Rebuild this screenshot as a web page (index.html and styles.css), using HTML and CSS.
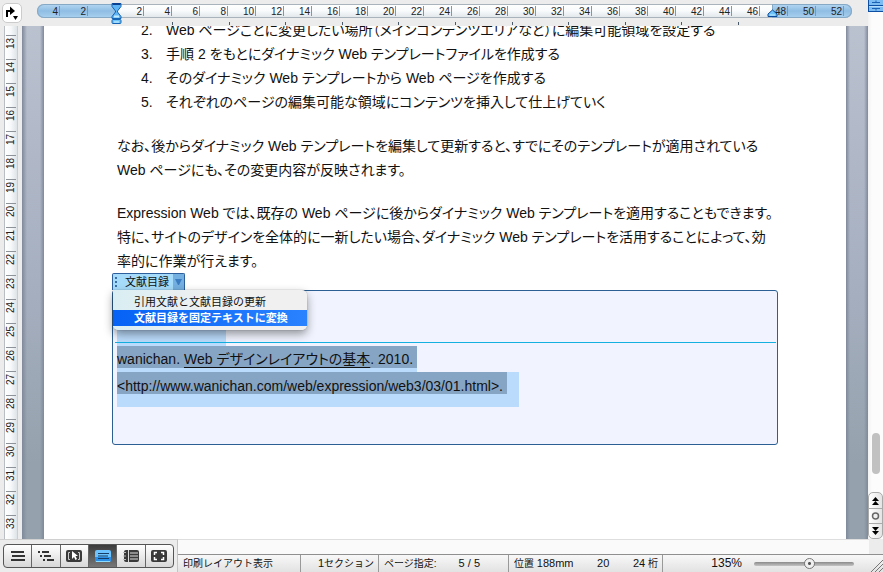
FILE: index.html
```
<!DOCTYPE html>
<html lang="ja">
<head>
    <meta charset="UTF-8">
    <meta name="viewport" content="width=device-width, initial-scale=1.0">
    <link rel="stylesheet" href="styles.css">
    <title>文献目録</title>
</head>
<body>
    <div class="ventana">
        <div class="principal">
            <header class="barra-regla">
                <button class="btn-tab" aria-label="タブ">
                    <svg width="16" height="18" viewBox="0 0 16 18">
                        <path d="M3 13V7H7" fill="none" stroke="#000" stroke-width="2"/>
                        <path d="M6 2.500l5 4.500-5 4z"/>
                        <path d="M9 12h5l-2.500 4z"/>
                    </svg>
                </button>
                <div class="regla">
                    <div class="margen izq"><span>4</span><span>2</span></div>
                    <div class="util">
                        <span>2</span><span>4</span><span>6</span><span>8</span><span>10</span><span>12</span>
                        <span>14</span><span>16</span><span>18</span><span>20</span><span>22</span><span>24</span>
                        <span>26</span><span>28</span><span>30</span><span>32</span><span>34</span><span>36</span>
                        <span>38</span><span>40</span><span>42</span><span>44</span><span>46</span>
                    </div>
                    <div class="margen der"><span class="corto">48</span><span>50</span><span>52</span></div>
                    <svg class="sangria" width="11" height="23" viewBox="0 0 11 23">
                        <path d="M1 1.500h9v3L6.500 9v1L10 14.500v2H1v-2L4.500 10V9L1 4.500z" fill="#5fb4f4" stroke="#1463b5"/>
                        <path d="M1.500 2h8" stroke="#0b3f8f" stroke-width="2"/>
                        <path d="M3 13.500h5v2H3z" fill="#c4ecff"/>
                        <rect x="1" y="17.500" width="9" height="4" rx="1" fill="#6cc3fa" stroke="#1463b5"/>
                        <path d="M3 20h5" stroke="#d3f3ff"/>
                    </svg>
                    <svg class="sangria-der" width="11" height="9" viewBox="0 0 11 9">
                        <path d="M5.500 1L10 5v2.500H1V5z" fill="#6cc3fa" stroke="#0b4a9a"/>
                        <path d="M3 6h5" stroke="#c4ecff"/>
                    </svg>
                </div>
                <div class="marcas"><i></i><i></i><i></i><i></i><i></i><i></i><i></i><i></i><i></i><i></i><i></i></div>
            </header>

            <div class="zona">
                <div class="regla-v">
                    <div class="numeros">
                        <span>13</span><span>14</span><span>15</span><span>16</span><span>17</span><span>18</span><span>19</span>
                        <span>20</span><span>21</span><span>22</span><span>23</span><span>24</span><span>25</span><span>26</span>
                        <span>27</span><span>28</span><span>29</span><span>30</span><span>31</span><span>32</span><span>33</span>
                    </div>
                </div>
                <div class="fondo">
                    <main class="pagina">
                        <ol>
                            <li><span>2.</span>Web ページごとに変更したい場所（メインコンテンツエリアなど）に編集可能領域を設定する</li>
                            <li><span>3.</span>手順 2 をもとにダイナミック Web テンプレートファイルを作成する</li>
                            <li><span>4.</span>そのダイナミック Web テンプレートから Web ページを作成する</li>
                            <li><span>5.</span>それぞれのページの編集可能な領域にコンテンツを挿入して仕上げていく</li>
                        </ol>
                        <p>なお、後からダイナミック Web テンプレートを編集して更新すると、すでにそのテンプレートが適用されている<br>Web ページにも、その変更内容が反映されます。</p>
                        <p>Expression Web では、既存の Web ページに後からダイナミック Web テンプレートを適用することもできます。<br>特に、サイトのデザインを全体的に一新したい場合、ダイナミック Web テンプレートを活用することによって、効<br>率的に作業が行えます。</p>

                        <section class="campo">
                            <button class="pestana"><span class="asa"></span><span class="titulo">文献目録</span><span class="flecha"></span></button>
                            <div class="caja">
                                <div class="sel-vacia"></div>
                                <div class="sel"><span>wanichan. <u>Web デザインレイアウトの基本</u>. 2010.</span></div>
                                <div class="sel ultima"><span>&lt;http://www.wanichan.com/web/expression/web3/03/01.html&gt;.</span></div>
                            </div>
                            <div class="menu" role="menu">
                                <button role="menuitem">引用文献と文献目録の更新</button>
                                <button role="menuitem" class="activo">文献目録を固定テキストに変換</button>
                            </div>
                        </section>
                    </main>
                </div>
            </div>
        </div>

        <aside class="scroll">
            <svg class="divisor" width="15" height="12" viewBox="0 0 15 12">
                <rect width="15" height="12" fill="#7dbcf2"/>
                <path d="M0 5.500h15M0 11.500h15M.5 0v12" stroke="#0c4fa3"/>
                <path d="M1 6.500h14" stroke="#b5ddfb"/>
                <path d="M4 2.500h8M4 8.500h8M8 .5v2M8 8.500v2" stroke="#1c62b4"/>
            </svg>
            <div class="pulgar"></div>
            <div class="navegar">
                <button aria-label="前へ"><svg width="13" height="14" viewBox="0 0 13 14"><path d="M6.500 3L10 7H3zM6.500 7L10 11H3z"/></svg></button>
                <button aria-label="選択"><svg width="13" height="14" viewBox="0 0 13 14"><circle cx="6.500" cy="7" r="3" fill="#eee" stroke="#666" stroke-width="1.500"/></svg></button>
                <button aria-label="次へ"><svg width="13" height="14" viewBox="0 0 13 14"><path d="M6.500 7L10 3H3zM6.500 11L10 7H3z"/></svg></button>
            </div>
        </aside>
    </div>

    <footer class="pie">
        <div class="vistas">
            <div class="grupo">
                <button aria-label="下書き"><svg width="18" height="16" viewBox="0 0 18 16"><path d="M2 4h13M3 8h13M2 12h14" stroke="#333" stroke-width="2"/></svg></button>
                <button aria-label="アウトライン"><svg width="18" height="16" viewBox="0 0 18 16"><path d="M1 4h2M5 4h7M3 8h2M7 8h7M6 12h2M10 12h7" stroke="#333" stroke-width="2"/></svg></button>
                <button aria-label="発行"><svg width="18" height="16" viewBox="0 0 18 16"><rect x="1" y="2" width="16" height="12" rx="2" fill="#3a3a3a"/><path d="M5 4.500H3.500v7H5M13 4.500h1.500v7H13" fill="none" stroke="#ccc"/><path d="M7 3v8l2-2 1.500 3 1.500-1-1.500-3H13z" fill="#fff"/></svg></button>
                <button aria-label="印刷レイアウト" class="pulsado"><svg width="18" height="16" viewBox="0 0 18 16"><rect x="1" y="2" width="16" height="12" rx="2" fill="#6cc3ff"/><path d="M1 9h16v3q0 2-2 2H3q-2 0-2-2z" fill="#2b8fe8"/><path d="M4 5.500h11M4 8h10M4 10.500h11" stroke="#173d66"/><path d="M2 13.500h14" stroke="#8cdcff"/></svg></button>
                <button aria-label="ノート"><svg width="18" height="16" viewBox="0 0 18 16"><rect x="2" y="2" width="15" height="12" rx="2" fill="#3a3a3a"/><path d="M6.500 2v12M8 5h8M8 8h8M8 11h8" stroke="#ddd"/><path d="M1 4.500h3M1 8h3M1 11.500h3" stroke="#bbb"/></svg></button>
                <button aria-label="全画面"><svg width="18" height="16" viewBox="0 0 18 16"><rect x="1" y="2" width="16" height="12" rx="2" fill="#3a3a3a"/><path d="M4.500 7V4.500H7M11 4.500h2.500V7M13.500 9v2.500H11M7 11.500H4.500V9" fill="none" stroke="#fff" stroke-width="1.500"/></svg></button>
            </div>
        </div>
        <div class="inferior">
            <div class="hueco"></div>
            <div class="estado">
                <div class="celda vista">印刷レイアウト表示</div>
                <div class="celda seccion"><b>1</b>セクション</div>
                <div class="celda paginas">ページ指定:<b>5 / 5</b></div>
                <div class="celda posicion"><span>位置 <b>188mm</b></span><b>20</b><span><b>24</b> 桁</span></div>
                <div class="zoom">
                    <label for="zoom">135%</label>
                    <input type="range" id="zoom" min="0" max="100" value="56">
                </div>
                <svg class="esquina" width="12" height="12" viewBox="0 0 12 12"><path d="M0 12L12 0M4 12l8-8M8 12l4-4" stroke="#777"/></svg>
            </div>
        </div>
    </footer>
</body>
</html>
```
FILE: styles.css
```
* {
    margin: 0;
    padding: 0;
    box-sizing: border-box;
}
body {
    display: flex;
    flex-direction: column;
    height: 100vh;
    overflow: hidden;
    background-color: #ececec;
    font-family: "Liberation Sans", "Noto Sans CJK JP", sans-serif;
    color: #111;
}
button {
    border: 0;
    background: none;
    font: inherit;
    color: inherit;
}
svg {display: block;}

.ventana {
    flex: 1;
    min-height: 0;
    display: flex;
}
.principal {
    flex: 1;
    min-width: 0;
    display: flex;
    flex-direction: column;
}

/* regla horizontal */
.barra-regla {
    position: relative;
    z-index: 2;
    display: flex;
    align-items: flex-start;
    height: 26px;
    padding: 4px 16px 0 2px;
    background-color: #ececec;
}
.btn-tab {
    width: 20px;
    height: 20px;
    margin-right: 15px;
    margin-top: -1px;
    padding: 0 1px;
    border: 1px solid #ccc;
    border-radius: 5px;
    background-color: #fff;
}
.regla {
    position: relative;
    flex: 1;
    display: flex;
    height: 14px;
    border-radius: 7px;
    box-shadow: inset 0 0 0 1px #a9b3bb;
    background: linear-gradient(#fff, #f8fafb 50%, #dfe5e9);
    font-size: 10px;
    line-height: 13px;
    color: #222;
}
.regla span {
    flex: none;
    width: 28px;
    height: 12px;
    margin-top: 1px;
    padding-right: 2px;
    text-align: right;
    background: linear-gradient(#8d9398, #8d9398) right center / 1px 10px no-repeat;
}
.margen {
    display: flex;
    background: linear-gradient(#b5d7f2, #8fbde3 50%, #a9d1f0);
    box-shadow: inset 0 0 0 1px #86a9c6;
}
.izq {
    width: 79px;
    border-radius: 7px 0 0 7px;
}
.izq span:first-child {width: 23px;}
.util {
    display: flex;
    width: 656px;
}
.der {
    flex: 1;
    border-radius: 0 7px 7px 0;
}
.der .corto {width: 16px;}
.sangria {
    position: absolute;
    left: 74px;
    top: -2px;
}
.sangria-der {
    position: absolute;
    left: 730px;
    top: 5px;
}
.marcas {
    position: absolute;
    left: 172px;
    bottom: 1px;
    width: 567px;
    display: flex;
    justify-content: space-between;
}
.marcas i {
    width: 1px;
    height: 3px;
    background-color: #4b5a68;
}

/* regla vertical y hoja */
.zona {
    flex: 1;
    min-height: 0;
    display: flex;
}
.regla-v {
    width: 22px;
    padding: 0 4px;
    overflow: hidden;
}
.numeros {
    min-height: 100%;
    padding-top: 9px;
    border-left: 1px solid #b9bfc4;
    border-right: 1px solid #c9ced2;
    background: linear-gradient(to right, #fff, #f6f8f9 50%, #dde3e7);
}
.numeros span {
    display: block;
    width: 10px;
    height: 24px;
    margin-left: 1px;
    padding-top: 9px;
    border-bottom: 1px solid #8d9398;
    font-size: 10px;
    line-height: 10px;
    text-align: center;
    writing-mode: vertical-rl;
    transform: rotate(180deg);
    color: #222;
}
.fondo {
    flex: 1;
    min-width: 0;
    padding: 0 22px;
    background: linear-gradient(to right, #7f899a, #7f899a00 5px, #7f899a00 18px, #7f899a 22px, #7f899a calc(100% - 22px), #7f899a00 calc(100% - 18px), #7f899a00 calc(100% - 4px), #7f899a), linear-gradient(#bac1cf, #a6afc0 50%, #95a2ad 85%);
}
.pagina {
    height: 100%;
    overflow: hidden;
    padding: 0 68px;
    background-color: #fff;
    font-size: 14px;
    line-height: 24px;
    font-feature-settings: "palt";
    white-space: nowrap;
}
.pagina ol {
    list-style: none;
    margin-top: -8px;
    margin-bottom: 20px;
    padding-left: 29px;
}
.pagina li {display: flex;}
.pagina li span {width: 25px;}
.pagina p {
    margin-bottom: 19px;
    padding-left: 5px;
}

/* campo del documento */
.campo {
    position: relative;
    margin-top: -19px;
}
.pestana {
    display: flex;
    align-items: stretch;
    width: 73px;
    height: 17px;
    border: 1px solid #2c5f9b;
    border-bottom: 0;
    border-radius: 2px 2px 0 0;
    background-color: #a6dcfa;
    font-size: 11px;
    line-height: 16px;
    font-feature-settings: normal;
}
.asa {
    width: 2px;
    margin: 3px 8px 1px 2px;
    background: repeating-linear-gradient(#3c6da6 0 2px, #a6dcfa 2px 4px);
}
.titulo {flex: 1; text-align: left;}
.flecha {
    width: 11px;
    background-color: #73afe0;
}
.flecha::before {
    content: "";
    display: block;
    margin: 5px 2px;
    border: 3px solid transparent;
    border-top: 6px solid #3b7dc0;
    border-bottom: 0;
}
.caja {
    height: 155px;
    padding-left: 4px;
    border: 1px solid #2c5f93;
    border-radius: 3px;
    background: linear-gradient(#14b0e0, #14b0e0) 2px 51px / calc(100% - 3px) 1px no-repeat #f1f4fe;
}
.sel-vacia {
    width: 109px;
    height: 55px;
    background: linear-gradient(#14b0e0, #14b0e0) 0 51px / 100% 1px no-repeat #badbfb;
}
.sel {
    width: fit-content;
    padding-bottom: 4px;
    background-color: #badbfb;
}
.sel span {
    display: block;
    height: 22px;
    padding-right: 4px;
    line-height: 26px;
    background-color: #86a5c5;
}
.sel u {
    text-underline-offset: 3px;
    text-decoration-thickness: 1px;
}
.ultima {padding: 0 12px 13px 0;}
.ultima span {line-height: 28px;}
.menu {
    position: absolute;
    top: 17px;
    left: 1px;
    width: 194px;
    padding: 4px 0;
    border-radius: 0 5px 5px 5px;
    background: linear-gradient(to right, #d9eef3, #f0f0f0 50%);
    box-shadow: 0 4px 10px rgba(0, 0, 0, .4), 0 0 1px rgba(0, 0, 0, .5);
}
.menu button {
    display: block;
    width: 100%;
    height: 16px;
    padding-left: 21px;
    font-size: 11px;
    line-height: 16px;
    font-feature-settings: normal;
    text-align: left;
}
.menu .activo {
    background: linear-gradient(to right, #0562f5, #2b82ff);
    color: #fff;
    font-weight: bold;
}

/* scroll */
.scroll {
    width: 15px;
    display: flex;
    flex-direction: column;
    align-items: center;
    background: linear-gradient(to right, #f2f2f2, #fcfcfc 4px);
}
.pulgar {
    width: 8px;
    height: 41px;
    margin-top: auto;
    margin-bottom: 18px;
    border-radius: 4px;
    background-color: #c1c1c1;
}
.navegar {
    width: 15px;
    border: 1px solid #aaa;
    border-radius: 5px;
    background: linear-gradient(to right, #fff, #e4e4e4);
}
.navegar button {
    display: block;
    width: 100%;
    height: 15px;
}
.navegar button + button {border-top: 1px solid #aaa;}

/* barra inferior */
.pie {
    display: flex;
    height: 33px;
}
.vistas {
    width: 178px;
    padding: 4px 3px;
    border-top: 1px solid #d0d0d0;
    border-right: 1px solid #c4c4c4;
}
.grupo {
    display: flex;
    height: 24px;
    border: 1px solid #555;
    border-radius: 4px;
    overflow: hidden;
    background: linear-gradient(#fff, #d8d8d8);
}
.grupo button {
    flex: 1;
    display: flex;
    align-items: center;
    justify-content: center;
}
.grupo button + button {border-left: 1px solid #666;}
.grupo .pulsado {background: linear-gradient(#3c3c3c, #777);}
.inferior {
    flex: 1;
    min-width: 0;
}
.hueco {
    height: 15px;
    margin-right: 14px;
    border-top: 1px solid #dedede;
    background-color: #fafafa;
}
.estado {
    display: flex;
    height: 18px;
    border-top: 1px solid #8f8f8f;
    background: linear-gradient(#f8f8f8, #e2e2e2);
    font-size: 10px;
    line-height: 17px;
}
.estado b {
    font-size: 11px;
    font-weight: normal;
}
.celda {
    border-right: 1px solid #999;
    white-space: nowrap;
}
.vista {width: 123px; padding-left: 5px;}
.seccion {width: 78px; padding-right: 4px; text-align: right;}
.paginas {
    display: flex;
    gap: 22px;
    width: 130px;
    padding-left: 5px;
}
.posicion {
    display: flex;
    justify-content: space-between;
    width: 154px;
    padding: 0 4px 0 5px;
}
.zoom {
    flex: 1;
    display: flex;
    align-items: center;
    justify-content: flex-end;
    gap: 12px;
    font-size: 12px;
}
.zoom input {
    appearance: none;
    width: 100px;
    height: 4px;
    border-radius: 2px;
    background: linear-gradient(#8a8a8a, #c4c4c4);
}
.zoom input::-webkit-slider-thumb {
    appearance: none;
    width: 11px;
    height: 11px;
    border: 1px solid #777;
    border-radius: 50%;
    background: radial-gradient(#555 1px, #eee 2px, #f6f6f6);
}
.esquina {
    align-self: flex-end;
    margin-left: 17px;
}
```
